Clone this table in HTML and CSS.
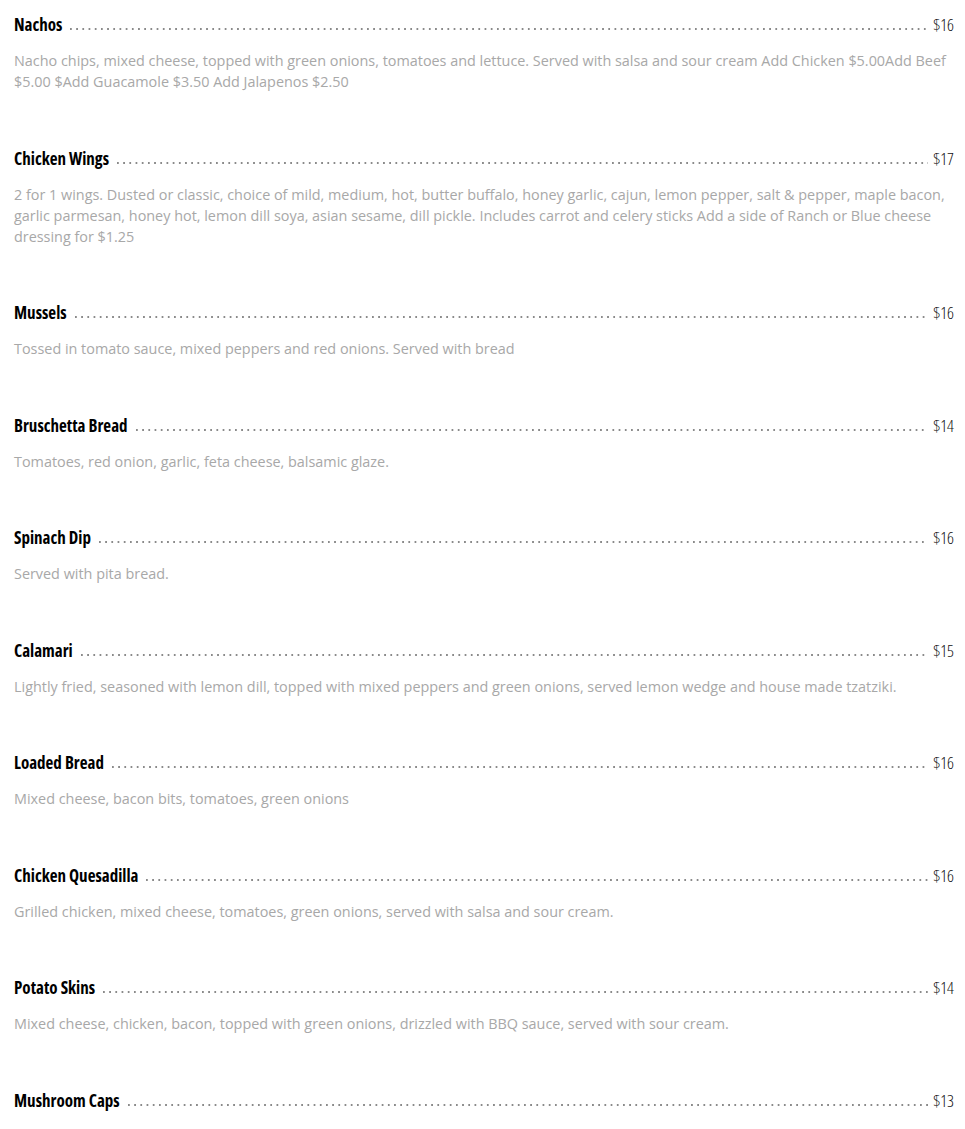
FILE: index.html
```html
<!DOCTYPE html>
<html>
  <head>
    <meta name="viewport" content="width=device-width, initial-scale=1.0">
    <title>Appetizers</title>
    <link rel="stylesheet" href="styles.css">
  </head>
  <body>
    <div class="menu">
      <div class="menuItem">
        <div class="itemHead">
          <span class="itemName">Nachos</span>
          <span class="leader"></span>
          <span class="itemPrice">$16</span>
        </div>
        <p class="itemDesc">Nacho chips, mixed cheese, topped with green onions, tomatoes and lettuce. Served with salsa and sour cream Add Chicken $5.00Add Beef $5.00 $Add Guacamole $3.50 Add Jalapenos $2.50</p>
      </div>
      <div class="menuItem">
        <div class="itemHead">
          <span class="itemName">Chicken Wings</span>
          <span class="leader"></span>
          <span class="itemPrice">$17</span>
        </div>
        <p class="itemDesc">2 for 1 wings. Dusted or classic, choice of mild, medium, hot, butter buffalo, honey garlic, cajun, lemon pepper, salt &amp; pepper, maple bacon, garlic parmesan, honey hot, lemon dill soya, asian sesame, dill pickle. Includes carrot and celery sticks Add a side of Ranch or Blue cheese dressing for $1.25</p>
      </div>
      <div class="menuItem">
        <div class="itemHead">
          <span class="itemName">Mussels</span>
          <span class="leader"></span>
          <span class="itemPrice">$16</span>
        </div>
        <p class="itemDesc">Tossed in tomato sauce, mixed peppers and red onions. Served with bread</p>
      </div>
      <div class="menuItem">
        <div class="itemHead">
          <span class="itemName">Bruschetta Bread</span>
          <span class="leader"></span>
          <span class="itemPrice">$14</span>
        </div>
        <p class="itemDesc">Tomatoes, red onion, garlic, feta cheese, balsamic glaze.</p>
      </div>
      <div class="menuItem">
        <div class="itemHead">
          <span class="itemName">Spinach Dip</span>
          <span class="leader"></span>
          <span class="itemPrice">$16</span>
        </div>
        <p class="itemDesc">Served with pita bread.</p>
      </div>
      <div class="menuItem">
        <div class="itemHead">
          <span class="itemName">Calamari</span>
          <span class="leader"></span>
          <span class="itemPrice">$15</span>
        </div>
        <p class="itemDesc">Lightly fried, seasoned with lemon dill, topped with mixed peppers and green onions, served lemon wedge and house made tzatziki.</p>
      </div>
      <div class="menuItem">
        <div class="itemHead">
          <span class="itemName">Loaded Bread</span>
          <span class="leader"></span>
          <span class="itemPrice">$16</span>
        </div>
        <p class="itemDesc">Mixed cheese, bacon bits, tomatoes, green onions</p>
      </div>
      <div class="menuItem">
        <div class="itemHead">
          <span class="itemName">Chicken Quesadilla</span>
          <span class="leader"></span>
          <span class="itemPrice">$16</span>
        </div>
        <p class="itemDesc">Grilled chicken, mixed cheese, tomatoes, green onions, served with salsa and sour cream.</p>
      </div>
      <div class="menuItem">
        <div class="itemHead">
          <span class="itemName">Potato Skins</span>
          <span class="leader"></span>
          <span class="itemPrice">$14</span>
        </div>
        <p class="itemDesc">Mixed cheese, chicken, bacon, topped with green onions, drizzled with BBQ sauce, served with sour cream.</p>
      </div>
      <div class="menuItem">
        <div class="itemHead">
          <span class="itemName">Mushroom Caps</span>
          <span class="leader"></span>
          <span class="itemPrice">$13</span>
        </div>
        <p class="itemDesc">Mushroom caps stuffed with cream cheese and spinach.</p>
      </div>
    </div>
  </body>
</html>
```

FILE: styles.css
```css
html {
  background-color: #fff;
}
body {
  margin: 0;
  padding: 10px 11px 0 14px;
  font-family: 'Open Sans', 'Liberation Sans', sans-serif;
  color: #111;
}
.menuItem {
  margin: 0 0 51.5px 0;
}
.itemHead {
  display: flex;
  align-items: baseline;
  height: 30px;
  line-height: 30px;
}
.itemName {
  font-size: 17px;
  font-weight: 700;
  font-stretch: condensed;
  color: #000;
  white-space: nowrap;
}
.leader {
  flex: 1;
  height: 3px;
  margin: 0 5px 0 8px;
  background-image: linear-gradient(to right, #8a8a8a 1.5px, transparent 1.5px);
  background-size: 6.2px 1.5px;
  background-repeat: repeat-x;
  background-position: 0 top;
}
.itemPrice {
  font-size: 17px;
  font-weight: 300;
  font-stretch: condensed;
  color: #111;
  white-space: nowrap;
}
.itemDesc {
  margin: 10px 0 0 0;
  font-size: 14.4px;
  line-height: 21px;
  color: #a8a8a8;
}
```
